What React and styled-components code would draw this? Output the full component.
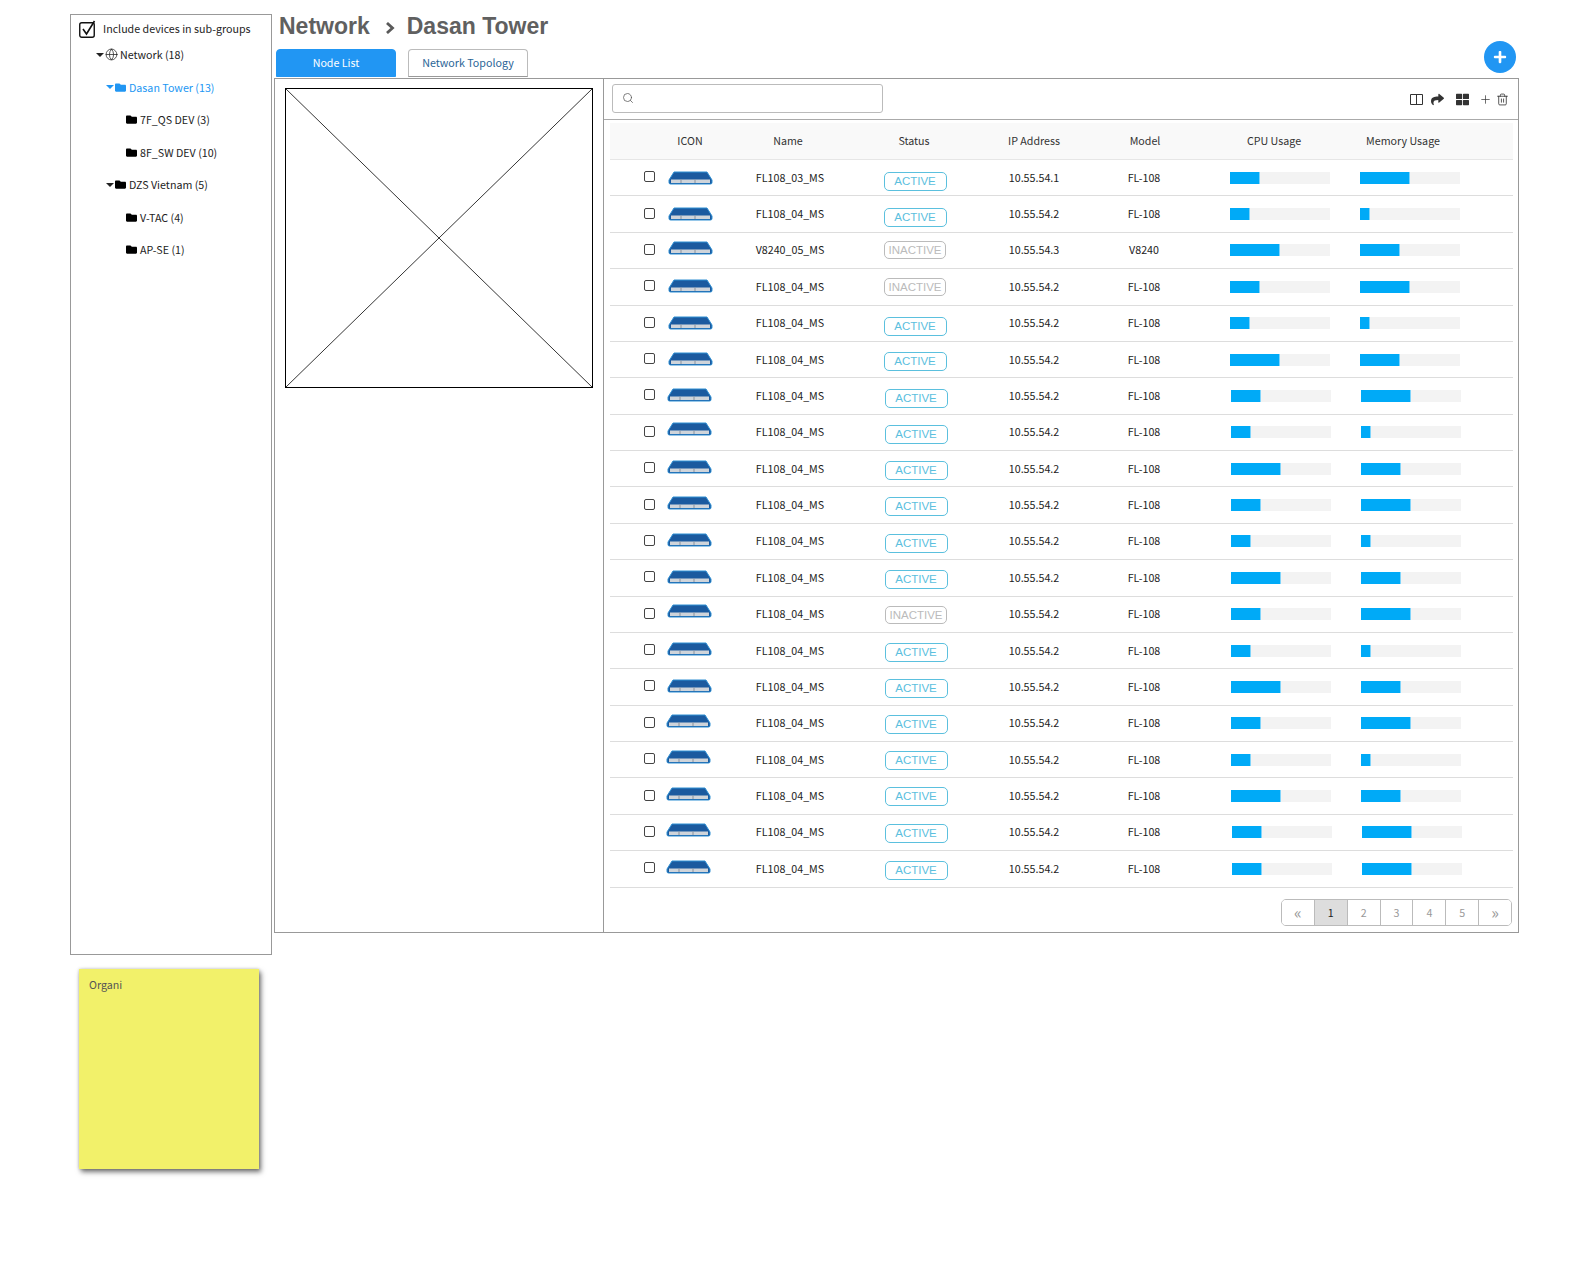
import React from 'react';
import styled, { createGlobalStyle } from 'styled-components';
import { Search, Plus, Trash2, Globe } from 'lucide-react';
import { FaFolder, FaShare, FaThLarge, FaPlus } from 'react-icons/fa';

const UI_FONT = '"Noto Sans CJK KR", "Noto Sans", sans-serif';

const GlobalStyle = createGlobalStyle`
  html, body {
    margin: 0;
    background: #fff;
    font-family: ${UI_FONT};
  }
  * { box-sizing: border-box; }
`;

const Page = styled.div`
  display: flex;
  align-items: flex-start;
  gap: 2px;
  width: 1569px;
  height: 1280px;
  padding: 14px 0 0 70px;
`;

const LeftColumn = styled.div`
  width: 202px;
  display: flex;
  flex-direction: column;
`;

const Sidebar = styled.aside`
  height: 941px;
  border: 1px solid #999;
  padding: 5px 8px;
`;

const IncludeRow = styled.div`
  display: flex;
  align-items: center;
  gap: 7px;
  height: 17px;
  font-size: 10.7px;
  color: #222;
  white-space: nowrap;
`;

const IncludeLabel = styled.span`
  padding-bottom: 1px;
`;

const TreeItem = styled.div`
  display: flex;
  align-items: center;
  height: 32.5px;
  padding-left: ${p => p.$indent}px;
  font-size: 10.7px;
  white-space: nowrap;
  color: ${p => (p.$active ? '#2196f3' : '#222')};
`;

const Tree = styled.div`
  margin-top: 1.5px;
`;

const Caret = styled.span`
  width: 0;
  height: 0;
  margin-right: 1px;
  border-left: 4px solid transparent;
  border-right: 4px solid transparent;
  border-top: 4px solid currentColor;
`;

const FolderGlyph = styled(FaFolder)`
  width: 11px;
  height: 11px;
  margin-right: 3px;
  color: ${p => (p.$active ? '#2196f3' : '#000')};
`;

const GlobeGlyph = styled(Globe)`
  width: 13px;
  height: 13px;
  margin-right: 2px;
  color: #222;
`;

const Note = styled.div`
  width: 180px;
  height: 200px;
  margin: 14px 0 0 9px;
  padding: 8px 10px;
  background: #f2f16a;
  box-shadow: 2px 3px 5px rgba(0, 0, 0, 0.55), 0 0 3px rgba(0, 0, 0, 0.2);
  font-size: 10.7px;
  color: #555;
`;

const MainColumn = styled.main`
  width: 1245px;
`;

const TitleBar = styled.h1`
  display: flex;
  align-items: center;
  height: 35px;
  margin: 0;
  padding: 0 0 10px 5px;
  font: bold 23px "Liberation Sans", Arial, sans-serif;
  color: #606060;
`;

const Chevron = styled.svg`
  width: 10px;
  height: 12px;
  margin: 2px 12px 0 15px;
`;

const TabBar = styled.div`
  position: relative;
  display: flex;
  gap: 12px;
  height: 29px;
  padding-left: 2px;
`;

const Tab = styled.div`
  display: flex;
  align-items: center;
  justify-content: center;
  width: 120px;
  height: 28px;
  padding-bottom: 2px;
  border: 1px solid ${p => (p.$active ? '#2196f3' : '#bbb')};
  border-bottom-color: ${p => (p.$active ? '#2196f3' : '#999')};
  border-radius: 4px 4px 0 0;
  background: ${p => (p.$active ? '#2196f3' : '#fff')};
  color: ${p => (p.$active ? '#fff' : '#2a6496')};
  font-size: 10.7px;
`;

const AddButton = styled.div`
  position: absolute;
  right: 3px;
  bottom: 5px;
  display: flex;
  align-items: center;
  justify-content: center;
  width: 32px;
  height: 32px;
  border-radius: 50%;
  background: #2196f3;
  color: #fff;
  font-size: 14px;
`;

const Frame = styled.section`
  display: flex;
  height: 855px;
  border: 1px solid #999;
`;

const PreviewPane = styled.div`
  width: 329px;
  flex-shrink: 0;
  padding: 9px 10px;
  border-right: 1px solid #999;
`;

const Placeholder = styled.svg`
  display: block;
  width: 308px;
  height: 300px;
`;

const ListPane = styled.div`
  flex: 1;
  min-width: 0;
`;

const Toolbar = styled.div`
  display: flex;
  align-items: center;
  height: 41px;
  padding: 0 9px 0 8px;
  border-bottom: 1px solid #aaa;
`;

const SearchBox = styled.div`
  display: flex;
  align-items: center;
  width: 271px;
  height: 29px;
  margin-top: -2px;
  padding-left: 9px;
  border: 1px solid #bbb;
  border-radius: 3px;
  color: #555;
`;

const ToolIcons = styled.div`
  display: flex;
  align-items: center;
  gap: 8px;
  margin-left: auto;
  color: #333;
`;

const GridGlyph = styled(FaThLarge)`
  margin-left: 4px;
`;

const PlusGlyph = styled(Plus)`
  margin-left: 2px;
`;

const TrashGlyph = styled(Trash2)`
  margin-left: -3.5px;
`;

const Table = styled.div`
  margin: 0 5px 0 6px;
`;

const HeaderRow = styled.div`
  display: grid;
  grid-template-columns: 57px 46px 150px 102px 138px 84px 174px 84px 1fr;
  align-items: center;
  height: 37px;
  margin-top: 3px;
  padding-bottom: 2px;
  background: #f9f9f9;
  border-bottom: 1px solid #e6e6e6;
  font-size: 10.7px;
  color: #333;
  text-align: center;
`;

const Row = styled.div`
  display: grid;
  grid-template-columns: 34px 24px 46px 152px 98px 140px 80px 176px 1fr;
  align-items: center;
  height: 36.375px;
  border-bottom: 1px solid #ddd;
  font-size: 10.7px;
  color: #222;
`;

const Check = styled.span`
  grid-column: 2;
  width: 11px;
  height: 11px;
  margin-bottom: 2px;
  border: 1.5px solid #444;
  border-radius: 2px;
`;

const DeviceIcon = styled.svg`
  display: block;
  width: 45px;
  height: 14px;
  margin-left: ${p => p.$shift}px;
  margin-bottom: ${p => p.$lift * 2}px;
`;

const Cell = styled.div`
  padding-bottom: 1px;
  text-align: center;
`;

const BadgeCell = styled.div`
  padding-left: ${p => p.$shift * 2}px;
  text-align: center;
`;

const Badge = styled.span`
  display: block;
  width: ${p => (p.$active ? 63 : 62)}px;
  height: ${p => (p.$active ? 19 : 18)}px;
  margin: ${p => p.$drop * 2}px auto 0;
  border: 1px solid ${p => (p.$active ? '#5bc0de' : '#bbb')};
  border-radius: 5px;
  font: 11.5px/17px "Liberation Sans", Arial, sans-serif;
  color: ${p => (p.$active ? '#5bc0de' : '#bbb')};
  text-align: center;
`;

const BarCell = styled.div`
  padding-left: ${p => p.$start}px;
`;

const Track = styled.div`
  width: 100px;
  height: 12px;
  background: #f3f3f3;
`;

const Fill = styled.div`
  height: 100%;
  background: #00aaf7;
  border-right: 1px solid #7fd4fb;
`;

const Pager = styled.div`
  display: flex;
  width: 231px;
  height: 27px;
  margin: 11px 1px 0 auto;
  border: 1px solid #bbb;
  border-radius: 5px;
  overflow: hidden;
`;

const PageItem = styled.div`
  flex: 1;
  display: flex;
  align-items: center;
  justify-content: center;
  font-size: ${p => (p.$arrow ? 16 : 10.7)}px;
  color: ${p => (p.$current ? '#222' : '#999')};
  background: ${p => (p.$current ? '#ddd' : '#fff')};
  & + & {
    border-left: 1px solid #bbb;
  }
`;

function Router({ shift, lift }) {
  return (
    <DeviceIcon $shift={shift} $lift={lift} viewBox="0 0 45 14">
      <path d="M6 1 H39 L44 9 V11.5 Q44 13 42.5 13 H2.5 Q1 13 1 11.5 V9 Z" fill="#1b5a9f" stroke="#2f8fd3" strokeWidth="1" />
      <rect x="3" y="8.5" width="39" height="3.5" fill="#cfd4da" />
      <path d="M13 8.5 v3.5 M27 8.5 v3.5" stroke="#8a929c" strokeWidth="1" />
    </DeviceIcon>
  );
}

function CheckedBox() {
  return (
    <svg width="17" height="18" viewBox="0 0 17 18">
      <rect x="0.75" y="2.75" width="14.5" height="14.5" rx="2" fill="none" stroke="#111" strokeWidth="1.4" />
      <path d="M4 9 L7.5 14 L15.5 1" fill="none" stroke="#111" strokeWidth="1.6" />
    </svg>
  );
}

function ColumnsIcon() {
  return (
    <svg width="13" height="11" viewBox="0 0 13 11">
      <path d="M0.5 0.5 H12.5 V10.5 H0.5 Z M6.5 0.5 V10.5" fill="none" stroke="currentColor" strokeWidth="1" />
    </svg>
  );
}

const TREE = [
  { label: 'Network (18)', indent: 17, caret: true, globe: true },
  { label: 'Dasan Tower (13)', indent: 27, caret: true, active: true },
  { label: '7F_QS DEV (3)', indent: 47 },
  { label: '8F_SW DEV (10)', indent: 47 },
  { label: 'DZS Vietnam (5)', indent: 27, caret: true },
  { label: 'V-TAC (4)', indent: 47 },
  { label: 'AP-SE (1)', indent: 47 },
];

const USAGE = [
  [29, 49],
  [19, 9],
  [49, 39],
];

const DROPS = [3.5, 3, 0, 0, 3, 1.5, 2.5, 2, 1.5, 1, 2, 1.5, 1, 1.5, 1.5, 1, 0.5, 0, 1, 1.5];
const ICON_LIFTS = [0, 0, 2, 1, 0, 1, 1, 3, 2, 2, 1, 1, 3, 2, 1, 2, 3, 2, 2, 2];

const ROWS = DROPS.map((drop, i) => ({
  name: i === 0 ? 'FL108_03_MS' : i === 2 ? 'V8240_05_MS' : 'FL108_04_MS',
  ip: i === 0 ? '10.55.54.1' : i === 2 ? '10.55.54.3' : '10.55.54.2',
  model: i === 2 ? 'V8240' : 'FL-108',
  active: ![2, 3, 12].includes(i),
  usage: i === 19 ? USAGE[0] : USAGE[i % 3],
  drop,
  iconLift: ICON_LIFTS[i],
  badgeShift: i < 6 ? 0 : 1,
  barShift: i < 6 ? 0 : i < 18 ? 1 : 2,
  iconShift: i < 6 ? 0 : i < 15 ? -1 : -2,
}));

const COLUMNS = ['', 'ICON', 'Name', 'Status', 'IP Address', 'Model', 'CPU Usage', 'Memory Usage'];

export default function App() {
  return (
    <Page>
      <GlobalStyle />
      <LeftColumn>
        <Sidebar>
          <IncludeRow>
            <CheckedBox />
            <IncludeLabel>Include devices in sub-groups</IncludeLabel>
          </IncludeRow>
          <Tree>
            {TREE.map(item => (
              <TreeItem key={item.label} $indent={item.indent} $active={item.active}>
                {item.caret && <Caret />}
                {item.globe ? <GlobeGlyph strokeWidth={1.4} /> : <FolderGlyph $active={item.active} />}
                {item.label}
              </TreeItem>
            ))}
          </Tree>
        </Sidebar>
        <Note>Organi</Note>
      </LeftColumn>

      <MainColumn>
        <TitleBar>
          Network
          <Chevron viewBox="0 0 10 12">
            <path d="M2 1 L7.5 6 L2 11" fill="none" stroke="#595959" strokeWidth="2.8" />
          </Chevron>
          Dasan Tower
        </TitleBar>
        <TabBar>
          <Tab $active>Node List</Tab>
          <Tab>Network Topology</Tab>
          <AddButton>
            <FaPlus />
          </AddButton>
        </TabBar>
        <Frame>
          <PreviewPane>
            <Placeholder viewBox="0 0 308 300">
              <rect x="0.5" y="0.5" width="307" height="299" fill="#fff" stroke="#000" />
              <path d="M0.5 0.5 L307.5 299.5 M307.5 0.5 L0.5 299.5" stroke="#000" strokeWidth="0.8" />
            </Placeholder>
          </PreviewPane>
          <ListPane>
            <Toolbar>
              <SearchBox>
                <Search size={12} strokeWidth={1.5} />
              </SearchBox>
              <ToolIcons>
                <ColumnsIcon />
                <FaShare size={13} />
                <GridGlyph size={13} />
                <PlusGlyph size={13} strokeWidth={1.3} />
                <TrashGlyph size={13} strokeWidth={1.5} />
              </ToolIcons>
            </Toolbar>
            <Table>
              <HeaderRow>
                {COLUMNS.map(col => (
                  <div key={col}>{col}</div>
                ))}
              </HeaderRow>
              {ROWS.map((row, i) => (
                <Row key={i}>
                  <Check />
                  <Router shift={row.iconShift} lift={row.iconLift} />
                  <Cell>{row.name}</Cell>
                  <BadgeCell $shift={row.badgeShift}>
                    <Badge $active={row.active} $drop={row.drop}>
                      {row.active ? 'ACTIVE' : 'INACTIVE'}
                    </Badge>
                  </BadgeCell>
                  <Cell>{row.ip}</Cell>
                  <Cell>{row.model}</Cell>
                  <BarCell $start={46 + row.barShift}>
                    <Track>
                      <Fill style={{ width: row.usage[0] + 1 }} />
                    </Track>
                  </BarCell>
                  <BarCell $start={row.barShift}>
                    <Track>
                      <Fill style={{ width: row.usage[1] + 1 }} />
                    </Track>
                  </BarCell>
                </Row>
              ))}
              <Pager>
                {['«', '1', '2', '3', '4', '5', '»'].map(p => (
                  <PageItem key={p} $current={p === '1'} $arrow={p === '«' || p === '»'}>
                    {p}
                  </PageItem>
                ))}
              </Pager>
            </Table>
          </ListPane>
        </Frame>
      </MainColumn>
    </Page>
  );
}
